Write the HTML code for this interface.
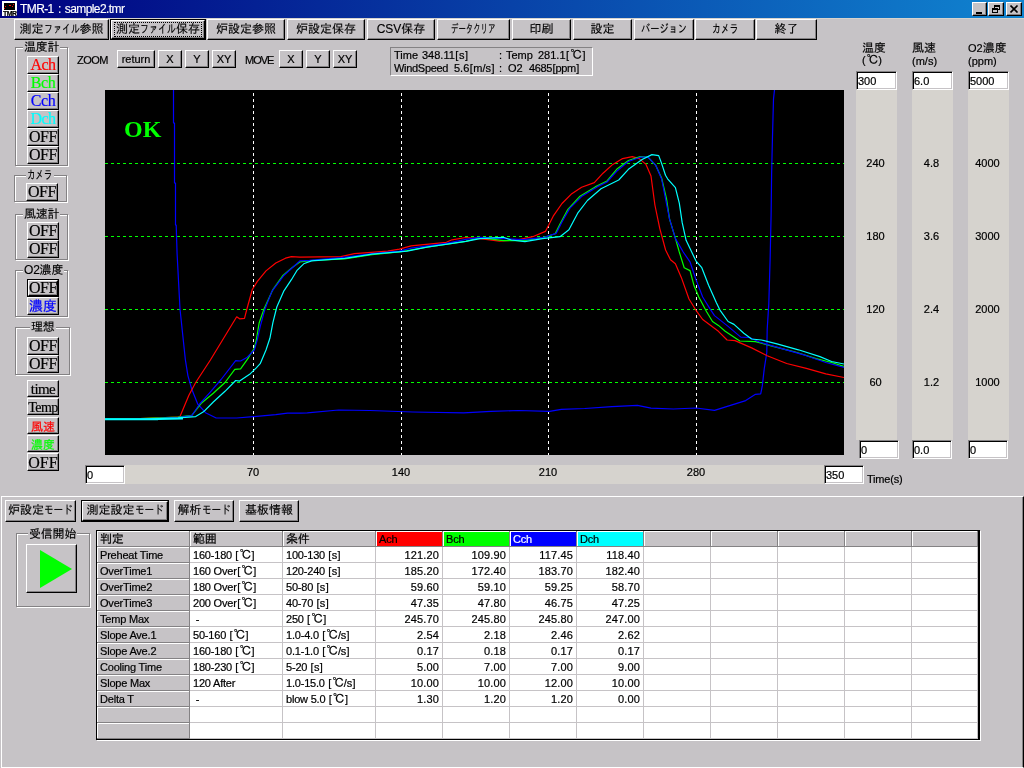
<!DOCTYPE html>
<html lang="ja"><head><meta charset="utf-8"><title>TMR-1 : sample2.tmr</title>
<style>
*{box-sizing:border-box;margin:0;padding:0}
html,body{width:1024px;height:768px;overflow:hidden;background:#C6C3C6}
body{will-change:transform;position:relative;font-family:"Liberation Sans","IPAGothic",sans-serif;font-size:11px;color:#000;line-height:1;-webkit-text-stroke:0.2px currentColor}
.a{position:absolute;white-space:nowrap}
.b{position:absolute;white-space:nowrap;background:#C6C3C6;border:1px solid;border-color:#fff #000 #000 #fff;box-shadow:inset -1px -1px 0 #848284;text-align:center;overflow:hidden}
.jp{font-family:"Liberation Sans","IPAGothic",sans-serif;font-size:12px;-webkit-text-stroke:0.15px currentColor}
.sf{font-family:"Liberation Serif","Noto Serif CJK JP",serif;font-size:16px}
.in{position:absolute;background:#fff;border:1px solid;border-color:#848284 #fff #fff #848284;box-shadow:inset 1px 1px 0 #000, inset -1px -1px 0 #C6C3C6;font-size:11px;padding:4px 0 0 1px;white-space:nowrap}
.gb{position:absolute;border:1px solid #848284;box-shadow:1px 1px 0 #fff, inset 1px 1px 0 #fff}
.lg{position:absolute;background:#C6C3C6;white-space:nowrap;font-size:12px;font-family:"Liberation Sans","IPAGothic",sans-serif;padding:0 1px;-webkit-text-stroke:0.15px currentColor;letter-spacing:-0.2px}
.col{position:absolute;background:#D6D3CE}
.kn{display:inline-block;white-space:nowrap;vertical-align:baseline}
.kn>span{display:inline-block;transform-origin:0 50%}
.q{padding:0 0.5px}
.dc{font-family:"Liberation Sans","IPAGothic",sans-serif;font-size:12px;line-height:0;margin-left:1px;margin-right:-0.5px}
.t{position:absolute;white-space:nowrap;font-size:11px}
</style></head>
<body>
<div class="a" style="left:0;top:0;width:1024px;height:18px;background:linear-gradient(90deg,#000080,#1084D0)"></div>
<div class="a" style="left:0;top:18px;width:1024px;height:1px;background:#D6D3CE"></div>
<div class="a" style="left:2px;top:1px;width:15px;height:15px;background:#fff"></div>
<div class="a" style="left:4px;top:3px;width:11px;height:7px;background:#000"></div>
<div class="a" style="left:5px;top:6px;width:1px;height:1px;background:#f00"></div>
<div class="a" style="left:4px;top:8px;width:1px;height:1px;background:#f00"></div>
<div class="a" style="left:9px;top:5px;width:2px;height:1px;background:#f00"></div>
<div class="a" style="left:13px;top:4px;width:1px;height:1px;background:#f00"></div>
<div class="a" style="left:12px;top:6px;width:1px;height:1px;background:#f00"></div>
<div class="a" style="left:3px;top:10px;font:bold 7px/7px 'Liberation Sans',sans-serif;letter-spacing:-0.6px;color:#000">TMR</div>
<div class="a jp" style="left:20px;top:3px;color:#fff;font-size:12px;letter-spacing:-0.6px;word-spacing:1.5px">TMR-1 : sample2.tmr</div>
<div class="b" style="left:972px;top:2px;width:15px;height:14px;background:#C6C3C6"><div class="a" style="left:3px;top:9px;width:6px;height:2px;background:#000"></div></div>
<div class="b" style="left:988px;top:2px;width:16px;height:14px;background:#C6C3C6"><div class="a" style="left:5px;top:2px;width:6px;height:5px;border:1px solid #000;border-top-width:2px"></div><div class="a" style="left:3px;top:5px;width:6px;height:5px;border:1px solid #000;border-top-width:2px;background:#C6C3C6"></div></div>
<div class="b" style="left:1006px;top:2px;width:16px;height:14px;background:#C6C3C6"><svg class="a" style="left:3px;top:2px" width="9" height="8" viewBox="0 0 9 8"><path d="M0.5 0.5 L7.5 7.5 M7.5 0.5 L0.5 7.5" stroke="#000" stroke-width="1.6" fill="none"/></svg></div>
<div class="b jp k" style="left:14px;top:19px;width:95px;height:21px;line-height:19px">測定<span class="kn" style="width:36px"><span style="transform:scaleX(0.7500)">ファイル</span></span>参照</div>
<div class="a" style="left:110px;top:19px;width:96px;height:21px;background:#000"></div>
<div class="b jp" style="left:111px;top:20px;width:94px;height:19px;line-height:17px"><span style="display:inline-block;border:1px dotted #000;height:15px;line-height:13px;margin-top:1px;padding:0 1px" class="k">測定<span class="kn" style="width:36px"><span style="transform:scaleX(0.7500)">ファイル</span></span>保存</span></div>
<div class="b jp k" style="left:207px;top:19px;width:78px;height:21px;line-height:19px">炉設定参照</div>
<div class="b jp k" style="left:287px;top:19px;width:78px;height:21px;line-height:19px">炉設定保存</div>
<div class="b jp k" style="left:367px;top:19px;width:68px;height:21px;line-height:19px">CSV保存</div>
<div class="b jp k" style="left:437px;top:19px;width:73px;height:21px;line-height:19px"><span class="kn" style="width:44.4px"><span style="transform:scaleX(0.6167)">データクリア</span></span></div>
<div class="b jp k" style="left:512px;top:19px;width:59px;height:21px;line-height:19px">印刷</div>
<div class="b jp k" style="left:573px;top:19px;width:59px;height:21px;line-height:19px">設定</div>
<div class="b jp k" style="left:634px;top:19px;width:60px;height:21px;line-height:19px"><span class="kn" style="width:46px"><span style="transform:scaleX(0.7667)">バージョン</span></span></div>
<div class="b jp k" style="left:695px;top:19px;width:60px;height:21px;line-height:19px"><span class="kn" style="width:26.4px"><span style="transform:scaleX(0.7333)">カメラ</span></span></div>
<div class="b jp k" style="left:756px;top:19px;width:61px;height:21px;line-height:19px">終了</div>
<div class="gb" style="left:15px;top:47px;width:53px;height:119px"></div>
<div class="lg" style="left:23px;top:41px;line-height:12px">温度計</div>
<div class="b sf" style="left:27px;top:56px;width:32px;height:18px;line-height:16px;color:#f00;letter-spacing:-0.5px;">Ach</div>
<div class="b sf" style="left:27px;top:74px;width:32px;height:18px;line-height:16px;color:#0f0;letter-spacing:-0.5px;">Bch</div>
<div class="b sf" style="left:27px;top:92px;width:32px;height:18px;line-height:16px;color:#00f;letter-spacing:-0.5px;">Cch</div>
<div class="b sf" style="left:27px;top:110px;width:32px;height:18px;line-height:16px;color:#0ff;letter-spacing:-0.5px;">Dch</div>
<div class="b sf" style="left:27px;top:128px;width:32px;height:18px;line-height:16px;color:#000;letter-spacing:-0.5px;">OFF</div>
<div class="b sf" style="left:27px;top:146px;width:32px;height:18px;line-height:16px;color:#000;letter-spacing:-0.5px;">OFF</div>
<div class="gb" style="left:14px;top:175px;width:53px;height:27px"></div>
<div class="lg" style="left:26px;top:169px;line-height:12px"><span class="kn" style="width:25.5px"><span style="transform:scaleX(0.7083)">カメラ</span></span></div>
<div class="b sf" style="left:26px;top:183px;width:32px;height:18px;line-height:16px;color:#000;letter-spacing:-0.5px;">OFF</div>
<div class="gb" style="left:15px;top:214px;width:53px;height:46px"></div>
<div class="lg" style="left:23px;top:208px;line-height:12px">風速計</div>
<div class="b sf" style="left:27px;top:222px;width:32px;height:18px;line-height:16px;color:#000;letter-spacing:-0.5px;">OFF</div>
<div class="b sf" style="left:27px;top:240px;width:32px;height:18px;line-height:16px;color:#000;letter-spacing:-0.5px;">OFF</div>
<div class="gb" style="left:15px;top:270px;width:53px;height:47px"></div>
<div class="lg" style="left:23px;top:264px;line-height:12px">O2濃度</div>
<div class="a" style="left:27px;top:279px;width:32px;height:18px;background:#000"></div>
<div class="b sf" style="left:28px;top:280px;width:30px;height:16px;line-height:14px;color:#000;letter-spacing:-0.5px;">OFF</div>
<div class="b sf" style="left:27px;top:297px;width:32px;height:18px;line-height:16px;color:#00f;letter-spacing:0px;font:14px/16px 'Liberation Sans','IPAGothic',sans-serif;">濃度</div>
<div class="gb" style="left:15px;top:327px;width:55px;height:48px"></div>
<div class="lg" style="left:30px;top:321px;line-height:12px">理想</div>
<div class="b sf" style="left:27px;top:337px;width:32px;height:18px;line-height:16px;color:#000;letter-spacing:-0.5px;">OFF</div>
<div class="b sf" style="left:27px;top:355px;width:32px;height:18px;line-height:16px;color:#000;letter-spacing:-0.5px;">OFF</div>
<div class="b sf" style="left:27px;top:380px;width:32px;height:17px;line-height:15px;color:#000;letter-spacing:-1px;line-height:17px;font-size:15px;letter-spacing:-0.6px;">time</div>
<div class="b sf" style="left:27px;top:398px;width:32px;height:17px;line-height:15px;color:#000;letter-spacing:-2px;line-height:17px;font-size:14px;letter-spacing:-0.5px;">Temp</div>
<div class="b sf" style="left:27px;top:417px;width:32px;height:17px;line-height:15px;color:#f00;letter-spacing:0px;font:12px/18px 'Liberation Sans','IPAGothic',sans-serif;">風速</div>
<div class="b sf" style="left:27px;top:435px;width:32px;height:17px;line-height:15px;color:#0f0;letter-spacing:0px;font:12px/18px 'Liberation Sans','IPAGothic',sans-serif;">濃度</div>
<div class="b sf" style="left:27px;top:453px;width:32px;height:18px;line-height:16px;color:#000;letter-spacing:-0.5px;line-height:17px;letter-spacing:0;">OFF</div>
<div class="t" style="left:77px;top:55px;letter-spacing:-0.5px">ZOOM</div>
<div class="b" style="left:117px;top:50px;width:38px;height:18px;line-height:17px;font-size:11px">return</div>
<div class="b" style="left:158px;top:50px;width:24px;height:18px;line-height:17px;font-size:11px">X</div>
<div class="b" style="left:185px;top:50px;width:24px;height:18px;line-height:17px;font-size:11px">Y</div>
<div class="b" style="left:212px;top:50px;width:24px;height:18px;line-height:17px;font-size:11px">XY</div>
<div class="t" style="left:245px;top:55px;letter-spacing:-1px">MOVE</div>
<div class="b" style="left:279px;top:50px;width:24px;height:18px;line-height:17px;font-size:11px">X</div>
<div class="b" style="left:306px;top:50px;width:24px;height:18px;line-height:17px;font-size:11px">Y</div>
<div class="b" style="left:333px;top:50px;width:24px;height:18px;line-height:17px;font-size:11px">XY</div>
<div class="a" style="left:390px;top:47px;width:203px;height:29px;border:1px solid;border-color:#848284 #fff #fff #848284"></div>
<div class="t" style="left:394px;top:50px">Time</div>
<div class="t" style="left:422px;top:50px">348.11<span class="q">[</span>s<span class="q">]</span></div>
<div class="t" style="left:499px;top:50px">:</div>
<div class="t" style="left:506px;top:50px">Temp</div>
<div class="t" style="left:538px;top:50px">281.1<span class="q">[</span><span class="dc">℃</span><span class="q">]</span></div>
<div class="t" style="left:394px;top:63px"><span style="letter-spacing:-0.3px">WindSpeed</span></div>
<div class="t" style="left:454px;top:63px">5.6<span class="q">[</span>m/s<span class="q">]</span></div>
<div class="t" style="left:499px;top:63px">:</div>
<div class="t" style="left:508px;top:63px">O2</div>
<div class="t" style="left:529px;top:63px"><span style="letter-spacing:-0.4px">4685<span class="q">[</span>ppm<span class="q">]</span></span></div>
<svg class="a" style="left:105px;top:90px" width="739" height="365" viewBox="105 90 739 365">
<rect x="105" y="90" width="739" height="365" fill="#000"/>
<line x1="105" x2="844" y1="163.5" y2="163.5" stroke="#0f0" stroke-width="1" stroke-dasharray="3 3" shape-rendering="crispEdges"/>
<line x1="105" x2="844" y1="236.5" y2="236.5" stroke="#0f0" stroke-width="1" stroke-dasharray="3 3" shape-rendering="crispEdges"/>
<line x1="105" x2="844" y1="309.5" y2="309.5" stroke="#0f0" stroke-width="1" stroke-dasharray="3 3" shape-rendering="crispEdges"/>
<line x1="105" x2="844" y1="382.5" y2="382.5" stroke="#0f0" stroke-width="1" stroke-dasharray="3 3" shape-rendering="crispEdges"/>
<line y1="90" y2="455" x1="253.5" x2="253.5" stroke="#fff" stroke-width="1" stroke-dasharray="3 3" stroke-dashoffset="3" shape-rendering="crispEdges"/>
<line y1="90" y2="455" x1="401.5" x2="401.5" stroke="#fff" stroke-width="1" stroke-dasharray="3 3" stroke-dashoffset="3" shape-rendering="crispEdges"/>
<line y1="90" y2="455" x1="548.5" x2="548.5" stroke="#fff" stroke-width="1" stroke-dasharray="3 3" stroke-dashoffset="3" shape-rendering="crispEdges"/>
<line y1="90" y2="455" x1="696.5" x2="696.5" stroke="#fff" stroke-width="1" stroke-dasharray="3 3" stroke-dashoffset="3" shape-rendering="crispEdges"/>
<polyline fill="none" stroke="#00f" stroke-width="1.2" stroke-linejoin="round" points="173.5,90.0 173.5,123.0 174.5,123.0 174.5,183.0 175.5,183.0 175.5,225.0 176.2,225.0 177.1,254.0 180.0,309.0 185.4,360.0 187.9,375.6 191.8,389.3 197.7,404.0 205.5,412.7 216.2,418.0 236.7,418.0 253.3,416.6 275.8,414.7 287.5,413.1 300.0,413.1 307.3,412.8 338.6,410.0 369.8,410.5 412.8,412.0 463.6,412.8 491.0,411.3 518.3,410.5 549.5,411.3 561.3,409.3 584.7,408.5 612.0,406.6 637.4,405.4 651.0,408.1 673.4,409.0 695.9,408.0 714.5,410.4 745.7,400.6 755.5,394.3 760.7,393.8 762.3,385.9 764.3,368.4 766.8,352.7 767.2,329.3 768.8,303.9 770.1,259.8 771.1,215.0 771.6,174.4 772.5,136.0 773.5,99.0 774.5,90.0"/>
<polyline fill="none" stroke="#f00" stroke-width="1.2" stroke-linejoin="round" points="105.0,418.7 140.0,418.7 178.0,417.2 180.0,416.6 188.9,395.2 195.7,382.5 210.4,360.0 236.7,316.8 239.6,318.8 244.5,318.4 246.9,309.0 252.3,289.5 257.2,281.6 266.0,270.9 275.8,263.0 285.5,258.2 291.4,256.6 300.0,257.2 340.8,256.6 354.5,253.7 387.7,251.1 399.4,249.2 411.1,245.9 446.3,242.3 452.1,239.8 465.8,237.5 480.0,238.6 499.5,241.2 519.0,239.6 532.7,236.7 545.4,231.4 553.2,216.2 562.0,203.5 571.8,193.7 581.6,187.3 594.3,182.6 603.0,173.2 612.8,164.4 622.6,158.6 632.3,156.6 639.2,158.6 646.0,164.4 651.0,176.0 654.9,205.0 659.8,228.6 665.6,250.0 670.5,259.8 675.4,263.8 681.3,277.4 689.0,299.0 696.9,311.7 702.7,319.5 718.4,331.3 727.1,340.0 735.0,340.6 751.6,347.9 767.2,355.7 786.7,363.5 806.3,368.4 825.8,373.8 844.0,377.5"/>
<polyline fill="none" stroke="#0f0" stroke-width="1.2" stroke-linejoin="round" points="105.0,418.7 140.0,418.7 178.0,417.2 191.8,415.3 197.7,407.9 201.6,403.0 213.3,393.2 225.0,382.5 234.8,369.4 240.6,368.8 248.4,357.8 254.3,348.0 256.3,340.0 259.2,322.7 264.0,309.0 272.9,289.5 282.6,275.8 292.0,267.7 299.8,261.9 313.4,260.3 344.7,258.9 372.0,254.6 399.4,252.0 426.7,247.2 465.8,241.4 480.0,237.7 503.4,240.6 523.0,240.6 542.5,237.7 555.2,233.8 560.0,224.0 567.9,209.3 579.6,196.6 595.2,186.9 607.0,181.0 616.7,169.3 628.4,160.5 640.2,156.6 648.0,157.2 655.8,165.4 661.6,178.0 666.5,198.6 669.5,218.8 675.4,238.4 679.3,252.0 684.2,267.7 690.0,270.6 693.9,285.2 698.8,297.0 706.6,311.7 712.5,321.5 718.4,325.4 725.2,331.3 739.8,341.0 755.5,341.6 771.1,345.9 794.5,351.8 816.0,358.6 831.6,362.5 844.0,366.4"/>
<polyline fill="none" stroke="#00f" stroke-width="1.2" stroke-linejoin="round" points="105.0,419.0 140.0,419.0 178.0,417.5 191.8,415.7 199.6,404.0 209.4,393.2 221.1,379.5 235.7,360.7 240.6,361.0 246.5,357.8 254.3,350.0 257.2,340.2 260.2,326.6 265.0,309.0 271.9,291.4 283.6,275.8 295.3,265.0 299.8,260.9 309.5,260.3 340.8,257.6 372.0,253.7 399.4,251.1 411.1,248.2 446.3,243.3 465.8,239.4 480.0,237.3 503.4,238.6 523.0,239.6 542.5,237.7 556.2,233.4 562.0,222.0 569.8,208.4 581.6,196.6 597.2,186.9 607.0,182.0 616.7,171.3 628.4,161.5 640.2,157.2 648.0,157.2 655.8,165.4 661.6,179.0 665.5,198.6 669.5,218.8 675.4,238.4 683.2,252.0 690.0,261.8 695.9,279.4 702.7,297.0 710.5,309.6 714.5,315.6 728.1,326.4 740.8,337.1 749.6,337.5 759.4,342.0 782.8,348.8 806.3,355.7 825.8,362.5 844.0,367.4"/>
<polyline fill="none" stroke="#0ff" stroke-width="1.2" stroke-linejoin="round" points="105.0,419.3 140.0,419.3 178.0,417.8 195.7,416.6 203.5,411.8 213.3,402.0 225.0,391.3 235.7,380.5 239.6,381.1 250.4,373.7 256.3,367.8 260.2,363.7 266.0,350.0 269.9,338.3 272.9,322.7 276.8,307.0 283.6,291.4 291.4,279.7 296.8,270.7 303.7,263.8 311.5,260.9 344.7,258.4 372.0,254.1 407.2,251.1 426.7,247.2 465.8,241.4 480.0,238.6 503.4,237.3 511.3,240.0 524.9,241.6 542.5,238.6 560.0,236.7 568.9,229.8 577.7,213.2 587.4,200.5 601.0,188.8 618.7,180.0 628.4,169.3 642.1,159.5 651.9,154.6 658.7,155.6 661.6,163.4 665.5,175.2 667.6,178.8 675.4,187.6 679.3,203.2 682.2,222.7 686.1,240.3 695.9,260.8 701.8,267.7 708.6,285.2 716.4,302.8 720.3,310.7 728.1,321.5 734.0,324.4 743.8,333.2 751.6,339.0 761.3,340.0 777.0,343.9 798.4,349.8 819.9,356.6 831.6,361.5 844.0,364.0"/>
<polyline fill="none" stroke="#0ff" stroke-width="2" points="105,419.3 158,419.3"/><polyline fill="none" stroke="#0ff" stroke-width="1.6" points="158,419.2 183,418.6"/>
<text x="124" y="137" fill="#0f0" font-family="Liberation Serif,serif" font-weight="bold" font-size="24">OK</text>
</svg>
<div class="t jp" style="left:862px;top:42px;font-size:12px">温度</div>
<div class="t" style="left:862px;top:55px;">(<span class="dc">℃</span>)</div>
<div class="t jp" style="left:912px;top:42px;font-size:12px">風速</div>
<div class="t" style="left:912px;top:56px;">(m/s)</div>
<div class="t jp" style="left:968px;top:42px;font-size:12px"><span style="font-size:11px">O2</span>濃度</div>
<div class="t" style="left:968px;top:56px;">(ppm)</div>
<div class="col" style="left:856px;top:90px;width:41px;height:350px"></div>
<div class="in" style="left:856px;top:71px;width:41px;height:19px">300</div>
<div class="in" style="left:859px;top:440px;width:40px;height:19px">0</div>
<div class="t" style="left:855px;top:158px;width:41px;text-align:center">240</div>
<div class="t" style="left:855px;top:231px;width:41px;text-align:center">180</div>
<div class="t" style="left:855px;top:304px;width:41px;text-align:center">120</div>
<div class="t" style="left:855px;top:377px;width:41px;text-align:center">60</div>
<div class="col" style="left:912px;top:90px;width:41px;height:350px"></div>
<div class="in" style="left:912px;top:71px;width:41px;height:19px">6.0</div>
<div class="in" style="left:912px;top:440px;width:40px;height:19px">0.0</div>
<div class="t" style="left:911px;top:158px;width:41px;text-align:center">4.8</div>
<div class="t" style="left:911px;top:231px;width:41px;text-align:center">3.6</div>
<div class="t" style="left:911px;top:304px;width:41px;text-align:center">2.4</div>
<div class="t" style="left:911px;top:377px;width:41px;text-align:center">1.2</div>
<div class="col" style="left:968px;top:90px;width:41px;height:350px"></div>
<div class="in" style="left:968px;top:71px;width:41px;height:19px">5000</div>
<div class="in" style="left:968px;top:440px;width:40px;height:19px">0</div>
<div class="t" style="left:967px;top:158px;width:41px;text-align:center">4000</div>
<div class="t" style="left:967px;top:231px;width:41px;text-align:center">3000</div>
<div class="t" style="left:967px;top:304px;width:41px;text-align:center">2000</div>
<div class="t" style="left:967px;top:377px;width:41px;text-align:center">1000</div>
<div class="col" style="left:125px;top:465px;width:700px;height:19px"></div>
<div class="in" style="left:85px;top:465px;width:40px;height:19px">0</div>
<div class="in" style="left:824px;top:465px;width:40px;height:19px">350</div>
<div class="t" style="left:233px;top:467px;width:40px;text-align:center">70</div>
<div class="t" style="left:381px;top:467px;width:40px;text-align:center">140</div>
<div class="t" style="left:528px;top:467px;width:40px;text-align:center">210</div>
<div class="t" style="left:676px;top:467px;width:40px;text-align:center">280</div>
<div class="t" style="left:867px;top:474px;letter-spacing:-0.2px">Time(s)</div>
<div class="a" style="left:1px;top:496px;width:1023px;height:272px;border-top:1px solid #fff;border-left:1px solid #fff;border-right:1px solid #000;border-bottom:1px solid #fff;box-shadow:inset -1px 0 0 #848284"></div>
<div class="b jp k" style="left:5px;top:500px;width:71px;height:22px;line-height:19px">炉設定<span class="kn" style="width:28.8px"><span style="transform:scaleX(0.8000)">モード</span></span></div>
<div class="a" style="left:81px;top:500px;width:88px;height:22px;background:#000"></div>
<div class="b jp k" style="left:82px;top:501px;width:86px;height:20px;line-height:17px">測定設定<span class="kn" style="width:28.8px"><span style="transform:scaleX(0.8000)">モード</span></span></div>
<div class="b jp k" style="left:174px;top:500px;width:60px;height:22px;line-height:19px">解析<span class="kn" style="width:28.8px"><span style="transform:scaleX(0.8000)">モード</span></span></div>
<div class="b jp k" style="left:239px;top:500px;width:60px;height:22px;line-height:19px">基板情報</div>
<div class="gb" style="left:16px;top:533px;width:74px;height:74px"></div>
<div class="lg" style="left:28px;top:528px;line-height:12px">受信開始</div>
<div class="b" style="left:26px;top:544px;width:51px;height:49px"><svg class="a" style="left:0;top:0" width="49" height="47"><polygon points="13,5 45,24 13,43" fill="#0f0"/></svg></div>
<div class="a" style="left:96px;top:530px;width:884px;height:210px;background:#fff;border:1px solid #000;border-right-width:2px;box-shadow:1px 1px 0 #fff"></div>
<div class="a" style="left:97px;top:531px;width:93px;height:16px;line-height:17px;white-space:pre;background:#C6C3C6;color:#000;border-right:1px solid #848284;border-bottom:1px solid #848284;box-shadow:inset 1px 1px 0 #fff;padding-left:3px;letter-spacing:-0.2px;font-family:'Liberation Sans','IPAGothic',sans-serif;font-size:12px;">判定</div>
<div class="a" style="left:190px;top:531px;width:93px;height:16px;line-height:17px;white-space:pre;background:#C6C3C6;color:#000;border-right:1px solid #848284;border-bottom:1px solid #848284;box-shadow:inset 1px 1px 0 #fff;padding-left:3px;letter-spacing:-0.2px;font-family:'Liberation Sans','IPAGothic',sans-serif;font-size:12px;">範囲</div>
<div class="a" style="left:283px;top:531px;width:93px;height:16px;line-height:17px;white-space:pre;background:#C6C3C6;color:#000;border-right:1px solid #848284;border-bottom:1px solid #848284;box-shadow:inset 1px 1px 0 #fff;padding-left:3px;letter-spacing:-0.2px;font-family:'Liberation Sans','IPAGothic',sans-serif;font-size:12px;">条件</div>
<div class="a" style="left:376px;top:531px;width:67px;height:16px;line-height:17px;white-space:pre;background:#f00;color:#000;border-right:1px solid #848284;border-bottom:1px solid #848284;box-shadow:inset 1px 1px 0 #fff;padding-left:3px;letter-spacing:-0.2px;">Ach</div>
<div class="a" style="left:443px;top:531px;width:67px;height:16px;line-height:17px;white-space:pre;background:#0f0;color:#000;border-right:1px solid #848284;border-bottom:1px solid #848284;box-shadow:inset 1px 1px 0 #fff;padding-left:3px;letter-spacing:-0.2px;">Bch</div>
<div class="a" style="left:510px;top:531px;width:67px;height:16px;line-height:17px;white-space:pre;background:#00f;color:#fff;border-right:1px solid #848284;border-bottom:1px solid #848284;box-shadow:inset 1px 1px 0 #fff;padding-left:3px;letter-spacing:-0.2px;">Cch</div>
<div class="a" style="left:577px;top:531px;width:67px;height:16px;line-height:17px;white-space:pre;background:#0ff;color:#000;border-right:1px solid #848284;border-bottom:1px solid #848284;box-shadow:inset 1px 1px 0 #fff;padding-left:3px;letter-spacing:-0.2px;">Dch</div>
<div class="a" style="left:644px;top:531px;width:67px;height:16px;line-height:17px;white-space:pre;background:#C6C3C6;color:#000;border-right:1px solid #848284;border-bottom:1px solid #848284;box-shadow:inset 1px 1px 0 #fff;padding-left:3px;letter-spacing:-0.2px;"></div>
<div class="a" style="left:711px;top:531px;width:67px;height:16px;line-height:17px;white-space:pre;background:#C6C3C6;color:#000;border-right:1px solid #848284;border-bottom:1px solid #848284;box-shadow:inset 1px 1px 0 #fff;padding-left:3px;letter-spacing:-0.2px;"></div>
<div class="a" style="left:778px;top:531px;width:67px;height:16px;line-height:17px;white-space:pre;background:#C6C3C6;color:#000;border-right:1px solid #848284;border-bottom:1px solid #848284;box-shadow:inset 1px 1px 0 #fff;padding-left:3px;letter-spacing:-0.2px;"></div>
<div class="a" style="left:845px;top:531px;width:67px;height:16px;line-height:17px;white-space:pre;background:#C6C3C6;color:#000;border-right:1px solid #848284;border-bottom:1px solid #848284;box-shadow:inset 1px 1px 0 #fff;padding-left:3px;letter-spacing:-0.2px;"></div>
<div class="a" style="left:912px;top:531px;width:66px;height:16px;line-height:17px;white-space:pre;background:#C6C3C6;color:#000;border-right:1px solid #848284;border-bottom:1px solid #848284;box-shadow:inset 1px 1px 0 #fff;padding-left:3px;letter-spacing:-0.2px;"></div>
<div class="a" style="left:97px;top:547px;width:93px;height:16px;line-height:17px;white-space:pre;background:#C6C3C6;color:#000;border-right:1px solid #848284;border-bottom:1px solid #848284;box-shadow:inset 1px 1px 0 #fff;padding-left:3px;letter-spacing:-0.2px;">Preheat Time</div>
<div class="a" style="left:190px;top:547px;width:93px;height:16px;line-height:17px;white-space:pre;background:#fff;border-right:1px solid #C6C3C6;border-bottom:1px solid #C6C3C6;padding-left:3px;letter-spacing:-0.2px;">160-180 <span class="q">[</span><span class="dc">℃</span><span class="q">]</span></div>
<div class="a" style="left:283px;top:547px;width:93px;height:16px;line-height:17px;white-space:pre;background:#fff;border-right:1px solid #C6C3C6;border-bottom:1px solid #C6C3C6;padding-left:3px;letter-spacing:-0.2px;">100-130 <span class="q">[</span>s<span class="q">]</span></div>
<div class="a" style="left:376px;top:547px;width:67px;height:16px;line-height:17px;white-space:pre;background:#fff;border-right:1px solid #C6C3C6;border-bottom:1px solid #C6C3C6;text-align:right;padding-right:3px;letter-spacing:0.15px;">121.20</div>
<div class="a" style="left:443px;top:547px;width:67px;height:16px;line-height:17px;white-space:pre;background:#fff;border-right:1px solid #C6C3C6;border-bottom:1px solid #C6C3C6;text-align:right;padding-right:3px;letter-spacing:0.15px;">109.90</div>
<div class="a" style="left:510px;top:547px;width:67px;height:16px;line-height:17px;white-space:pre;background:#fff;border-right:1px solid #C6C3C6;border-bottom:1px solid #C6C3C6;text-align:right;padding-right:3px;letter-spacing:0.15px;">117.45</div>
<div class="a" style="left:577px;top:547px;width:67px;height:16px;line-height:17px;white-space:pre;background:#fff;border-right:1px solid #C6C3C6;border-bottom:1px solid #C6C3C6;text-align:right;padding-right:3px;letter-spacing:0.15px;">118.40</div>
<div class="a" style="left:644px;top:547px;width:67px;height:16px;line-height:17px;white-space:pre;background:#fff;border-right:1px solid #C6C3C6;border-bottom:1px solid #C6C3C6;text-align:right;padding-right:3px;letter-spacing:0.15px;"></div>
<div class="a" style="left:711px;top:547px;width:67px;height:16px;line-height:17px;white-space:pre;background:#fff;border-right:1px solid #C6C3C6;border-bottom:1px solid #C6C3C6;text-align:right;padding-right:3px;letter-spacing:0.15px;"></div>
<div class="a" style="left:778px;top:547px;width:67px;height:16px;line-height:17px;white-space:pre;background:#fff;border-right:1px solid #C6C3C6;border-bottom:1px solid #C6C3C6;text-align:right;padding-right:3px;letter-spacing:0.15px;"></div>
<div class="a" style="left:845px;top:547px;width:67px;height:16px;line-height:17px;white-space:pre;background:#fff;border-right:1px solid #C6C3C6;border-bottom:1px solid #C6C3C6;text-align:right;padding-right:3px;letter-spacing:0.15px;"></div>
<div class="a" style="left:912px;top:547px;width:66px;height:16px;line-height:17px;white-space:pre;background:#fff;border-right:1px solid #C6C3C6;border-bottom:1px solid #C6C3C6;text-align:right;padding-right:3px;letter-spacing:0.15px;"></div>
<div class="a" style="left:97px;top:563px;width:93px;height:16px;line-height:17px;white-space:pre;background:#C6C3C6;color:#000;border-right:1px solid #848284;border-bottom:1px solid #848284;box-shadow:inset 1px 1px 0 #fff;padding-left:3px;letter-spacing:-0.2px;">OverTime1</div>
<div class="a" style="left:190px;top:563px;width:93px;height:16px;line-height:17px;white-space:pre;background:#fff;border-right:1px solid #C6C3C6;border-bottom:1px solid #C6C3C6;padding-left:3px;letter-spacing:-0.2px;">160 Over<span class="q">[</span><span class="dc">℃</span><span class="q">]</span></div>
<div class="a" style="left:283px;top:563px;width:93px;height:16px;line-height:17px;white-space:pre;background:#fff;border-right:1px solid #C6C3C6;border-bottom:1px solid #C6C3C6;padding-left:3px;letter-spacing:-0.2px;">120-240 <span class="q">[</span>s<span class="q">]</span></div>
<div class="a" style="left:376px;top:563px;width:67px;height:16px;line-height:17px;white-space:pre;background:#fff;border-right:1px solid #C6C3C6;border-bottom:1px solid #C6C3C6;text-align:right;padding-right:3px;letter-spacing:0.15px;">185.20</div>
<div class="a" style="left:443px;top:563px;width:67px;height:16px;line-height:17px;white-space:pre;background:#fff;border-right:1px solid #C6C3C6;border-bottom:1px solid #C6C3C6;text-align:right;padding-right:3px;letter-spacing:0.15px;">172.40</div>
<div class="a" style="left:510px;top:563px;width:67px;height:16px;line-height:17px;white-space:pre;background:#fff;border-right:1px solid #C6C3C6;border-bottom:1px solid #C6C3C6;text-align:right;padding-right:3px;letter-spacing:0.15px;">183.70</div>
<div class="a" style="left:577px;top:563px;width:67px;height:16px;line-height:17px;white-space:pre;background:#fff;border-right:1px solid #C6C3C6;border-bottom:1px solid #C6C3C6;text-align:right;padding-right:3px;letter-spacing:0.15px;">182.40</div>
<div class="a" style="left:644px;top:563px;width:67px;height:16px;line-height:17px;white-space:pre;background:#fff;border-right:1px solid #C6C3C6;border-bottom:1px solid #C6C3C6;text-align:right;padding-right:3px;letter-spacing:0.15px;"></div>
<div class="a" style="left:711px;top:563px;width:67px;height:16px;line-height:17px;white-space:pre;background:#fff;border-right:1px solid #C6C3C6;border-bottom:1px solid #C6C3C6;text-align:right;padding-right:3px;letter-spacing:0.15px;"></div>
<div class="a" style="left:778px;top:563px;width:67px;height:16px;line-height:17px;white-space:pre;background:#fff;border-right:1px solid #C6C3C6;border-bottom:1px solid #C6C3C6;text-align:right;padding-right:3px;letter-spacing:0.15px;"></div>
<div class="a" style="left:845px;top:563px;width:67px;height:16px;line-height:17px;white-space:pre;background:#fff;border-right:1px solid #C6C3C6;border-bottom:1px solid #C6C3C6;text-align:right;padding-right:3px;letter-spacing:0.15px;"></div>
<div class="a" style="left:912px;top:563px;width:66px;height:16px;line-height:17px;white-space:pre;background:#fff;border-right:1px solid #C6C3C6;border-bottom:1px solid #C6C3C6;text-align:right;padding-right:3px;letter-spacing:0.15px;"></div>
<div class="a" style="left:97px;top:579px;width:93px;height:16px;line-height:17px;white-space:pre;background:#C6C3C6;color:#000;border-right:1px solid #848284;border-bottom:1px solid #848284;box-shadow:inset 1px 1px 0 #fff;padding-left:3px;letter-spacing:-0.2px;">OverTime2</div>
<div class="a" style="left:190px;top:579px;width:93px;height:16px;line-height:17px;white-space:pre;background:#fff;border-right:1px solid #C6C3C6;border-bottom:1px solid #C6C3C6;padding-left:3px;letter-spacing:-0.2px;">180 Over<span class="q">[</span><span class="dc">℃</span><span class="q">]</span></div>
<div class="a" style="left:283px;top:579px;width:93px;height:16px;line-height:17px;white-space:pre;background:#fff;border-right:1px solid #C6C3C6;border-bottom:1px solid #C6C3C6;padding-left:3px;letter-spacing:-0.2px;">50-80 <span class="q">[</span>s<span class="q">]</span></div>
<div class="a" style="left:376px;top:579px;width:67px;height:16px;line-height:17px;white-space:pre;background:#fff;border-right:1px solid #C6C3C6;border-bottom:1px solid #C6C3C6;text-align:right;padding-right:3px;letter-spacing:0.15px;">59.60</div>
<div class="a" style="left:443px;top:579px;width:67px;height:16px;line-height:17px;white-space:pre;background:#fff;border-right:1px solid #C6C3C6;border-bottom:1px solid #C6C3C6;text-align:right;padding-right:3px;letter-spacing:0.15px;">59.10</div>
<div class="a" style="left:510px;top:579px;width:67px;height:16px;line-height:17px;white-space:pre;background:#fff;border-right:1px solid #C6C3C6;border-bottom:1px solid #C6C3C6;text-align:right;padding-right:3px;letter-spacing:0.15px;">59.25</div>
<div class="a" style="left:577px;top:579px;width:67px;height:16px;line-height:17px;white-space:pre;background:#fff;border-right:1px solid #C6C3C6;border-bottom:1px solid #C6C3C6;text-align:right;padding-right:3px;letter-spacing:0.15px;">58.70</div>
<div class="a" style="left:644px;top:579px;width:67px;height:16px;line-height:17px;white-space:pre;background:#fff;border-right:1px solid #C6C3C6;border-bottom:1px solid #C6C3C6;text-align:right;padding-right:3px;letter-spacing:0.15px;"></div>
<div class="a" style="left:711px;top:579px;width:67px;height:16px;line-height:17px;white-space:pre;background:#fff;border-right:1px solid #C6C3C6;border-bottom:1px solid #C6C3C6;text-align:right;padding-right:3px;letter-spacing:0.15px;"></div>
<div class="a" style="left:778px;top:579px;width:67px;height:16px;line-height:17px;white-space:pre;background:#fff;border-right:1px solid #C6C3C6;border-bottom:1px solid #C6C3C6;text-align:right;padding-right:3px;letter-spacing:0.15px;"></div>
<div class="a" style="left:845px;top:579px;width:67px;height:16px;line-height:17px;white-space:pre;background:#fff;border-right:1px solid #C6C3C6;border-bottom:1px solid #C6C3C6;text-align:right;padding-right:3px;letter-spacing:0.15px;"></div>
<div class="a" style="left:912px;top:579px;width:66px;height:16px;line-height:17px;white-space:pre;background:#fff;border-right:1px solid #C6C3C6;border-bottom:1px solid #C6C3C6;text-align:right;padding-right:3px;letter-spacing:0.15px;"></div>
<div class="a" style="left:97px;top:595px;width:93px;height:16px;line-height:17px;white-space:pre;background:#C6C3C6;color:#000;border-right:1px solid #848284;border-bottom:1px solid #848284;box-shadow:inset 1px 1px 0 #fff;padding-left:3px;letter-spacing:-0.2px;">OverTime3</div>
<div class="a" style="left:190px;top:595px;width:93px;height:16px;line-height:17px;white-space:pre;background:#fff;border-right:1px solid #C6C3C6;border-bottom:1px solid #C6C3C6;padding-left:3px;letter-spacing:-0.2px;">200 Over<span class="q">[</span><span class="dc">℃</span><span class="q">]</span></div>
<div class="a" style="left:283px;top:595px;width:93px;height:16px;line-height:17px;white-space:pre;background:#fff;border-right:1px solid #C6C3C6;border-bottom:1px solid #C6C3C6;padding-left:3px;letter-spacing:-0.2px;">40-70 <span class="q">[</span>s<span class="q">]</span></div>
<div class="a" style="left:376px;top:595px;width:67px;height:16px;line-height:17px;white-space:pre;background:#fff;border-right:1px solid #C6C3C6;border-bottom:1px solid #C6C3C6;text-align:right;padding-right:3px;letter-spacing:0.15px;">47.35</div>
<div class="a" style="left:443px;top:595px;width:67px;height:16px;line-height:17px;white-space:pre;background:#fff;border-right:1px solid #C6C3C6;border-bottom:1px solid #C6C3C6;text-align:right;padding-right:3px;letter-spacing:0.15px;">47.80</div>
<div class="a" style="left:510px;top:595px;width:67px;height:16px;line-height:17px;white-space:pre;background:#fff;border-right:1px solid #C6C3C6;border-bottom:1px solid #C6C3C6;text-align:right;padding-right:3px;letter-spacing:0.15px;">46.75</div>
<div class="a" style="left:577px;top:595px;width:67px;height:16px;line-height:17px;white-space:pre;background:#fff;border-right:1px solid #C6C3C6;border-bottom:1px solid #C6C3C6;text-align:right;padding-right:3px;letter-spacing:0.15px;">47.25</div>
<div class="a" style="left:644px;top:595px;width:67px;height:16px;line-height:17px;white-space:pre;background:#fff;border-right:1px solid #C6C3C6;border-bottom:1px solid #C6C3C6;text-align:right;padding-right:3px;letter-spacing:0.15px;"></div>
<div class="a" style="left:711px;top:595px;width:67px;height:16px;line-height:17px;white-space:pre;background:#fff;border-right:1px solid #C6C3C6;border-bottom:1px solid #C6C3C6;text-align:right;padding-right:3px;letter-spacing:0.15px;"></div>
<div class="a" style="left:778px;top:595px;width:67px;height:16px;line-height:17px;white-space:pre;background:#fff;border-right:1px solid #C6C3C6;border-bottom:1px solid #C6C3C6;text-align:right;padding-right:3px;letter-spacing:0.15px;"></div>
<div class="a" style="left:845px;top:595px;width:67px;height:16px;line-height:17px;white-space:pre;background:#fff;border-right:1px solid #C6C3C6;border-bottom:1px solid #C6C3C6;text-align:right;padding-right:3px;letter-spacing:0.15px;"></div>
<div class="a" style="left:912px;top:595px;width:66px;height:16px;line-height:17px;white-space:pre;background:#fff;border-right:1px solid #C6C3C6;border-bottom:1px solid #C6C3C6;text-align:right;padding-right:3px;letter-spacing:0.15px;"></div>
<div class="a" style="left:97px;top:611px;width:93px;height:16px;line-height:17px;white-space:pre;background:#C6C3C6;color:#000;border-right:1px solid #848284;border-bottom:1px solid #848284;box-shadow:inset 1px 1px 0 #fff;padding-left:3px;letter-spacing:-0.2px;">Temp Max</div>
<div class="a" style="left:190px;top:611px;width:93px;height:16px;line-height:17px;white-space:pre;background:#fff;border-right:1px solid #C6C3C6;border-bottom:1px solid #C6C3C6;padding-left:3px;letter-spacing:-0.2px;"> -</div>
<div class="a" style="left:283px;top:611px;width:93px;height:16px;line-height:17px;white-space:pre;background:#fff;border-right:1px solid #C6C3C6;border-bottom:1px solid #C6C3C6;padding-left:3px;letter-spacing:-0.2px;">250 <span class="q">[</span><span class="dc">℃</span><span class="q">]</span></div>
<div class="a" style="left:376px;top:611px;width:67px;height:16px;line-height:17px;white-space:pre;background:#fff;border-right:1px solid #C6C3C6;border-bottom:1px solid #C6C3C6;text-align:right;padding-right:3px;letter-spacing:0.15px;">245.70</div>
<div class="a" style="left:443px;top:611px;width:67px;height:16px;line-height:17px;white-space:pre;background:#fff;border-right:1px solid #C6C3C6;border-bottom:1px solid #C6C3C6;text-align:right;padding-right:3px;letter-spacing:0.15px;">245.80</div>
<div class="a" style="left:510px;top:611px;width:67px;height:16px;line-height:17px;white-space:pre;background:#fff;border-right:1px solid #C6C3C6;border-bottom:1px solid #C6C3C6;text-align:right;padding-right:3px;letter-spacing:0.15px;">245.80</div>
<div class="a" style="left:577px;top:611px;width:67px;height:16px;line-height:17px;white-space:pre;background:#fff;border-right:1px solid #C6C3C6;border-bottom:1px solid #C6C3C6;text-align:right;padding-right:3px;letter-spacing:0.15px;">247.00</div>
<div class="a" style="left:644px;top:611px;width:67px;height:16px;line-height:17px;white-space:pre;background:#fff;border-right:1px solid #C6C3C6;border-bottom:1px solid #C6C3C6;text-align:right;padding-right:3px;letter-spacing:0.15px;"></div>
<div class="a" style="left:711px;top:611px;width:67px;height:16px;line-height:17px;white-space:pre;background:#fff;border-right:1px solid #C6C3C6;border-bottom:1px solid #C6C3C6;text-align:right;padding-right:3px;letter-spacing:0.15px;"></div>
<div class="a" style="left:778px;top:611px;width:67px;height:16px;line-height:17px;white-space:pre;background:#fff;border-right:1px solid #C6C3C6;border-bottom:1px solid #C6C3C6;text-align:right;padding-right:3px;letter-spacing:0.15px;"></div>
<div class="a" style="left:845px;top:611px;width:67px;height:16px;line-height:17px;white-space:pre;background:#fff;border-right:1px solid #C6C3C6;border-bottom:1px solid #C6C3C6;text-align:right;padding-right:3px;letter-spacing:0.15px;"></div>
<div class="a" style="left:912px;top:611px;width:66px;height:16px;line-height:17px;white-space:pre;background:#fff;border-right:1px solid #C6C3C6;border-bottom:1px solid #C6C3C6;text-align:right;padding-right:3px;letter-spacing:0.15px;"></div>
<div class="a" style="left:97px;top:627px;width:93px;height:16px;line-height:17px;white-space:pre;background:#C6C3C6;color:#000;border-right:1px solid #848284;border-bottom:1px solid #848284;box-shadow:inset 1px 1px 0 #fff;padding-left:3px;letter-spacing:-0.2px;">Slope Ave.1</div>
<div class="a" style="left:190px;top:627px;width:93px;height:16px;line-height:17px;white-space:pre;background:#fff;border-right:1px solid #C6C3C6;border-bottom:1px solid #C6C3C6;padding-left:3px;letter-spacing:-0.2px;">50-160 <span class="q">[</span><span class="dc">℃</span><span class="q">]</span></div>
<div class="a" style="left:283px;top:627px;width:93px;height:16px;line-height:17px;white-space:pre;background:#fff;border-right:1px solid #C6C3C6;border-bottom:1px solid #C6C3C6;padding-left:3px;letter-spacing:-0.2px;">1.0-4.0 <span class="q">[</span><span class="dc">℃</span>/s<span class="q">]</span></div>
<div class="a" style="left:376px;top:627px;width:67px;height:16px;line-height:17px;white-space:pre;background:#fff;border-right:1px solid #C6C3C6;border-bottom:1px solid #C6C3C6;text-align:right;padding-right:3px;letter-spacing:0.15px;">2.54</div>
<div class="a" style="left:443px;top:627px;width:67px;height:16px;line-height:17px;white-space:pre;background:#fff;border-right:1px solid #C6C3C6;border-bottom:1px solid #C6C3C6;text-align:right;padding-right:3px;letter-spacing:0.15px;">2.18</div>
<div class="a" style="left:510px;top:627px;width:67px;height:16px;line-height:17px;white-space:pre;background:#fff;border-right:1px solid #C6C3C6;border-bottom:1px solid #C6C3C6;text-align:right;padding-right:3px;letter-spacing:0.15px;">2.46</div>
<div class="a" style="left:577px;top:627px;width:67px;height:16px;line-height:17px;white-space:pre;background:#fff;border-right:1px solid #C6C3C6;border-bottom:1px solid #C6C3C6;text-align:right;padding-right:3px;letter-spacing:0.15px;">2.62</div>
<div class="a" style="left:644px;top:627px;width:67px;height:16px;line-height:17px;white-space:pre;background:#fff;border-right:1px solid #C6C3C6;border-bottom:1px solid #C6C3C6;text-align:right;padding-right:3px;letter-spacing:0.15px;"></div>
<div class="a" style="left:711px;top:627px;width:67px;height:16px;line-height:17px;white-space:pre;background:#fff;border-right:1px solid #C6C3C6;border-bottom:1px solid #C6C3C6;text-align:right;padding-right:3px;letter-spacing:0.15px;"></div>
<div class="a" style="left:778px;top:627px;width:67px;height:16px;line-height:17px;white-space:pre;background:#fff;border-right:1px solid #C6C3C6;border-bottom:1px solid #C6C3C6;text-align:right;padding-right:3px;letter-spacing:0.15px;"></div>
<div class="a" style="left:845px;top:627px;width:67px;height:16px;line-height:17px;white-space:pre;background:#fff;border-right:1px solid #C6C3C6;border-bottom:1px solid #C6C3C6;text-align:right;padding-right:3px;letter-spacing:0.15px;"></div>
<div class="a" style="left:912px;top:627px;width:66px;height:16px;line-height:17px;white-space:pre;background:#fff;border-right:1px solid #C6C3C6;border-bottom:1px solid #C6C3C6;text-align:right;padding-right:3px;letter-spacing:0.15px;"></div>
<div class="a" style="left:97px;top:643px;width:93px;height:16px;line-height:17px;white-space:pre;background:#C6C3C6;color:#000;border-right:1px solid #848284;border-bottom:1px solid #848284;box-shadow:inset 1px 1px 0 #fff;padding-left:3px;letter-spacing:-0.2px;">Slope Ave.2</div>
<div class="a" style="left:190px;top:643px;width:93px;height:16px;line-height:17px;white-space:pre;background:#fff;border-right:1px solid #C6C3C6;border-bottom:1px solid #C6C3C6;padding-left:3px;letter-spacing:-0.2px;">160-180 <span class="q">[</span><span class="dc">℃</span><span class="q">]</span></div>
<div class="a" style="left:283px;top:643px;width:93px;height:16px;line-height:17px;white-space:pre;background:#fff;border-right:1px solid #C6C3C6;border-bottom:1px solid #C6C3C6;padding-left:3px;letter-spacing:-0.2px;">0.1-1.0 <span class="q">[</span><span class="dc">℃</span>/s<span class="q">]</span></div>
<div class="a" style="left:376px;top:643px;width:67px;height:16px;line-height:17px;white-space:pre;background:#fff;border-right:1px solid #C6C3C6;border-bottom:1px solid #C6C3C6;text-align:right;padding-right:3px;letter-spacing:0.15px;">0.17</div>
<div class="a" style="left:443px;top:643px;width:67px;height:16px;line-height:17px;white-space:pre;background:#fff;border-right:1px solid #C6C3C6;border-bottom:1px solid #C6C3C6;text-align:right;padding-right:3px;letter-spacing:0.15px;">0.18</div>
<div class="a" style="left:510px;top:643px;width:67px;height:16px;line-height:17px;white-space:pre;background:#fff;border-right:1px solid #C6C3C6;border-bottom:1px solid #C6C3C6;text-align:right;padding-right:3px;letter-spacing:0.15px;">0.17</div>
<div class="a" style="left:577px;top:643px;width:67px;height:16px;line-height:17px;white-space:pre;background:#fff;border-right:1px solid #C6C3C6;border-bottom:1px solid #C6C3C6;text-align:right;padding-right:3px;letter-spacing:0.15px;">0.17</div>
<div class="a" style="left:644px;top:643px;width:67px;height:16px;line-height:17px;white-space:pre;background:#fff;border-right:1px solid #C6C3C6;border-bottom:1px solid #C6C3C6;text-align:right;padding-right:3px;letter-spacing:0.15px;"></div>
<div class="a" style="left:711px;top:643px;width:67px;height:16px;line-height:17px;white-space:pre;background:#fff;border-right:1px solid #C6C3C6;border-bottom:1px solid #C6C3C6;text-align:right;padding-right:3px;letter-spacing:0.15px;"></div>
<div class="a" style="left:778px;top:643px;width:67px;height:16px;line-height:17px;white-space:pre;background:#fff;border-right:1px solid #C6C3C6;border-bottom:1px solid #C6C3C6;text-align:right;padding-right:3px;letter-spacing:0.15px;"></div>
<div class="a" style="left:845px;top:643px;width:67px;height:16px;line-height:17px;white-space:pre;background:#fff;border-right:1px solid #C6C3C6;border-bottom:1px solid #C6C3C6;text-align:right;padding-right:3px;letter-spacing:0.15px;"></div>
<div class="a" style="left:912px;top:643px;width:66px;height:16px;line-height:17px;white-space:pre;background:#fff;border-right:1px solid #C6C3C6;border-bottom:1px solid #C6C3C6;text-align:right;padding-right:3px;letter-spacing:0.15px;"></div>
<div class="a" style="left:97px;top:659px;width:93px;height:16px;line-height:17px;white-space:pre;background:#C6C3C6;color:#000;border-right:1px solid #848284;border-bottom:1px solid #848284;box-shadow:inset 1px 1px 0 #fff;padding-left:3px;letter-spacing:-0.2px;">Cooling Time</div>
<div class="a" style="left:190px;top:659px;width:93px;height:16px;line-height:17px;white-space:pre;background:#fff;border-right:1px solid #C6C3C6;border-bottom:1px solid #C6C3C6;padding-left:3px;letter-spacing:-0.2px;">180-230 <span class="q">[</span><span class="dc">℃</span><span class="q">]</span></div>
<div class="a" style="left:283px;top:659px;width:93px;height:16px;line-height:17px;white-space:pre;background:#fff;border-right:1px solid #C6C3C6;border-bottom:1px solid #C6C3C6;padding-left:3px;letter-spacing:-0.2px;">5-20 <span class="q">[</span>s<span class="q">]</span></div>
<div class="a" style="left:376px;top:659px;width:67px;height:16px;line-height:17px;white-space:pre;background:#fff;border-right:1px solid #C6C3C6;border-bottom:1px solid #C6C3C6;text-align:right;padding-right:3px;letter-spacing:0.15px;">5.00</div>
<div class="a" style="left:443px;top:659px;width:67px;height:16px;line-height:17px;white-space:pre;background:#fff;border-right:1px solid #C6C3C6;border-bottom:1px solid #C6C3C6;text-align:right;padding-right:3px;letter-spacing:0.15px;">7.00</div>
<div class="a" style="left:510px;top:659px;width:67px;height:16px;line-height:17px;white-space:pre;background:#fff;border-right:1px solid #C6C3C6;border-bottom:1px solid #C6C3C6;text-align:right;padding-right:3px;letter-spacing:0.15px;">7.00</div>
<div class="a" style="left:577px;top:659px;width:67px;height:16px;line-height:17px;white-space:pre;background:#fff;border-right:1px solid #C6C3C6;border-bottom:1px solid #C6C3C6;text-align:right;padding-right:3px;letter-spacing:0.15px;">9.00</div>
<div class="a" style="left:644px;top:659px;width:67px;height:16px;line-height:17px;white-space:pre;background:#fff;border-right:1px solid #C6C3C6;border-bottom:1px solid #C6C3C6;text-align:right;padding-right:3px;letter-spacing:0.15px;"></div>
<div class="a" style="left:711px;top:659px;width:67px;height:16px;line-height:17px;white-space:pre;background:#fff;border-right:1px solid #C6C3C6;border-bottom:1px solid #C6C3C6;text-align:right;padding-right:3px;letter-spacing:0.15px;"></div>
<div class="a" style="left:778px;top:659px;width:67px;height:16px;line-height:17px;white-space:pre;background:#fff;border-right:1px solid #C6C3C6;border-bottom:1px solid #C6C3C6;text-align:right;padding-right:3px;letter-spacing:0.15px;"></div>
<div class="a" style="left:845px;top:659px;width:67px;height:16px;line-height:17px;white-space:pre;background:#fff;border-right:1px solid #C6C3C6;border-bottom:1px solid #C6C3C6;text-align:right;padding-right:3px;letter-spacing:0.15px;"></div>
<div class="a" style="left:912px;top:659px;width:66px;height:16px;line-height:17px;white-space:pre;background:#fff;border-right:1px solid #C6C3C6;border-bottom:1px solid #C6C3C6;text-align:right;padding-right:3px;letter-spacing:0.15px;"></div>
<div class="a" style="left:97px;top:675px;width:93px;height:16px;line-height:17px;white-space:pre;background:#C6C3C6;color:#000;border-right:1px solid #848284;border-bottom:1px solid #848284;box-shadow:inset 1px 1px 0 #fff;padding-left:3px;letter-spacing:-0.2px;">Slope Max</div>
<div class="a" style="left:190px;top:675px;width:93px;height:16px;line-height:17px;white-space:pre;background:#fff;border-right:1px solid #C6C3C6;border-bottom:1px solid #C6C3C6;padding-left:3px;letter-spacing:-0.2px;">120 After</div>
<div class="a" style="left:283px;top:675px;width:93px;height:16px;line-height:17px;white-space:pre;background:#fff;border-right:1px solid #C6C3C6;border-bottom:1px solid #C6C3C6;padding-left:3px;letter-spacing:-0.2px;">1.0-15.0 <span class="q">[</span><span class="dc">℃</span>/s<span class="q">]</span></div>
<div class="a" style="left:376px;top:675px;width:67px;height:16px;line-height:17px;white-space:pre;background:#fff;border-right:1px solid #C6C3C6;border-bottom:1px solid #C6C3C6;text-align:right;padding-right:3px;letter-spacing:0.15px;">10.00</div>
<div class="a" style="left:443px;top:675px;width:67px;height:16px;line-height:17px;white-space:pre;background:#fff;border-right:1px solid #C6C3C6;border-bottom:1px solid #C6C3C6;text-align:right;padding-right:3px;letter-spacing:0.15px;">10.00</div>
<div class="a" style="left:510px;top:675px;width:67px;height:16px;line-height:17px;white-space:pre;background:#fff;border-right:1px solid #C6C3C6;border-bottom:1px solid #C6C3C6;text-align:right;padding-right:3px;letter-spacing:0.15px;">12.00</div>
<div class="a" style="left:577px;top:675px;width:67px;height:16px;line-height:17px;white-space:pre;background:#fff;border-right:1px solid #C6C3C6;border-bottom:1px solid #C6C3C6;text-align:right;padding-right:3px;letter-spacing:0.15px;">10.00</div>
<div class="a" style="left:644px;top:675px;width:67px;height:16px;line-height:17px;white-space:pre;background:#fff;border-right:1px solid #C6C3C6;border-bottom:1px solid #C6C3C6;text-align:right;padding-right:3px;letter-spacing:0.15px;"></div>
<div class="a" style="left:711px;top:675px;width:67px;height:16px;line-height:17px;white-space:pre;background:#fff;border-right:1px solid #C6C3C6;border-bottom:1px solid #C6C3C6;text-align:right;padding-right:3px;letter-spacing:0.15px;"></div>
<div class="a" style="left:778px;top:675px;width:67px;height:16px;line-height:17px;white-space:pre;background:#fff;border-right:1px solid #C6C3C6;border-bottom:1px solid #C6C3C6;text-align:right;padding-right:3px;letter-spacing:0.15px;"></div>
<div class="a" style="left:845px;top:675px;width:67px;height:16px;line-height:17px;white-space:pre;background:#fff;border-right:1px solid #C6C3C6;border-bottom:1px solid #C6C3C6;text-align:right;padding-right:3px;letter-spacing:0.15px;"></div>
<div class="a" style="left:912px;top:675px;width:66px;height:16px;line-height:17px;white-space:pre;background:#fff;border-right:1px solid #C6C3C6;border-bottom:1px solid #C6C3C6;text-align:right;padding-right:3px;letter-spacing:0.15px;"></div>
<div class="a" style="left:97px;top:691px;width:93px;height:16px;line-height:17px;white-space:pre;background:#C6C3C6;color:#000;border-right:1px solid #848284;border-bottom:1px solid #848284;box-shadow:inset 1px 1px 0 #fff;padding-left:3px;letter-spacing:-0.2px;">Delta T</div>
<div class="a" style="left:190px;top:691px;width:93px;height:16px;line-height:17px;white-space:pre;background:#fff;border-right:1px solid #C6C3C6;border-bottom:1px solid #C6C3C6;padding-left:3px;letter-spacing:-0.2px;"> -</div>
<div class="a" style="left:283px;top:691px;width:93px;height:16px;line-height:17px;white-space:pre;background:#fff;border-right:1px solid #C6C3C6;border-bottom:1px solid #C6C3C6;padding-left:3px;letter-spacing:-0.2px;">blow 5.0 <span class="q">[</span><span class="dc">℃</span><span class="q">]</span></div>
<div class="a" style="left:376px;top:691px;width:67px;height:16px;line-height:17px;white-space:pre;background:#fff;border-right:1px solid #C6C3C6;border-bottom:1px solid #C6C3C6;text-align:right;padding-right:3px;letter-spacing:0.15px;">1.30</div>
<div class="a" style="left:443px;top:691px;width:67px;height:16px;line-height:17px;white-space:pre;background:#fff;border-right:1px solid #C6C3C6;border-bottom:1px solid #C6C3C6;text-align:right;padding-right:3px;letter-spacing:0.15px;">1.20</div>
<div class="a" style="left:510px;top:691px;width:67px;height:16px;line-height:17px;white-space:pre;background:#fff;border-right:1px solid #C6C3C6;border-bottom:1px solid #C6C3C6;text-align:right;padding-right:3px;letter-spacing:0.15px;">1.20</div>
<div class="a" style="left:577px;top:691px;width:67px;height:16px;line-height:17px;white-space:pre;background:#fff;border-right:1px solid #C6C3C6;border-bottom:1px solid #C6C3C6;text-align:right;padding-right:3px;letter-spacing:0.15px;">0.00</div>
<div class="a" style="left:644px;top:691px;width:67px;height:16px;line-height:17px;white-space:pre;background:#fff;border-right:1px solid #C6C3C6;border-bottom:1px solid #C6C3C6;text-align:right;padding-right:3px;letter-spacing:0.15px;"></div>
<div class="a" style="left:711px;top:691px;width:67px;height:16px;line-height:17px;white-space:pre;background:#fff;border-right:1px solid #C6C3C6;border-bottom:1px solid #C6C3C6;text-align:right;padding-right:3px;letter-spacing:0.15px;"></div>
<div class="a" style="left:778px;top:691px;width:67px;height:16px;line-height:17px;white-space:pre;background:#fff;border-right:1px solid #C6C3C6;border-bottom:1px solid #C6C3C6;text-align:right;padding-right:3px;letter-spacing:0.15px;"></div>
<div class="a" style="left:845px;top:691px;width:67px;height:16px;line-height:17px;white-space:pre;background:#fff;border-right:1px solid #C6C3C6;border-bottom:1px solid #C6C3C6;text-align:right;padding-right:3px;letter-spacing:0.15px;"></div>
<div class="a" style="left:912px;top:691px;width:66px;height:16px;line-height:17px;white-space:pre;background:#fff;border-right:1px solid #C6C3C6;border-bottom:1px solid #C6C3C6;text-align:right;padding-right:3px;letter-spacing:0.15px;"></div>
<div class="a" style="left:97px;top:707px;width:93px;height:16px;line-height:17px;white-space:pre;background:#C6C3C6;color:#000;border-right:1px solid #848284;border-bottom:1px solid #848284;box-shadow:inset 1px 1px 0 #fff;padding-left:3px;letter-spacing:-0.2px;"></div>
<div class="a" style="left:190px;top:707px;width:93px;height:16px;line-height:17px;white-space:pre;background:#fff;border-right:1px solid #C6C3C6;border-bottom:1px solid #C6C3C6;padding-left:3px;letter-spacing:-0.2px;"></div>
<div class="a" style="left:283px;top:707px;width:93px;height:16px;line-height:17px;white-space:pre;background:#fff;border-right:1px solid #C6C3C6;border-bottom:1px solid #C6C3C6;padding-left:3px;letter-spacing:-0.2px;"></div>
<div class="a" style="left:376px;top:707px;width:67px;height:16px;line-height:17px;white-space:pre;background:#fff;border-right:1px solid #C6C3C6;border-bottom:1px solid #C6C3C6;text-align:right;padding-right:3px;letter-spacing:0.15px;"></div>
<div class="a" style="left:443px;top:707px;width:67px;height:16px;line-height:17px;white-space:pre;background:#fff;border-right:1px solid #C6C3C6;border-bottom:1px solid #C6C3C6;text-align:right;padding-right:3px;letter-spacing:0.15px;"></div>
<div class="a" style="left:510px;top:707px;width:67px;height:16px;line-height:17px;white-space:pre;background:#fff;border-right:1px solid #C6C3C6;border-bottom:1px solid #C6C3C6;text-align:right;padding-right:3px;letter-spacing:0.15px;"></div>
<div class="a" style="left:577px;top:707px;width:67px;height:16px;line-height:17px;white-space:pre;background:#fff;border-right:1px solid #C6C3C6;border-bottom:1px solid #C6C3C6;text-align:right;padding-right:3px;letter-spacing:0.15px;"></div>
<div class="a" style="left:644px;top:707px;width:67px;height:16px;line-height:17px;white-space:pre;background:#fff;border-right:1px solid #C6C3C6;border-bottom:1px solid #C6C3C6;text-align:right;padding-right:3px;letter-spacing:0.15px;"></div>
<div class="a" style="left:711px;top:707px;width:67px;height:16px;line-height:17px;white-space:pre;background:#fff;border-right:1px solid #C6C3C6;border-bottom:1px solid #C6C3C6;text-align:right;padding-right:3px;letter-spacing:0.15px;"></div>
<div class="a" style="left:778px;top:707px;width:67px;height:16px;line-height:17px;white-space:pre;background:#fff;border-right:1px solid #C6C3C6;border-bottom:1px solid #C6C3C6;text-align:right;padding-right:3px;letter-spacing:0.15px;"></div>
<div class="a" style="left:845px;top:707px;width:67px;height:16px;line-height:17px;white-space:pre;background:#fff;border-right:1px solid #C6C3C6;border-bottom:1px solid #C6C3C6;text-align:right;padding-right:3px;letter-spacing:0.15px;"></div>
<div class="a" style="left:912px;top:707px;width:66px;height:16px;line-height:17px;white-space:pre;background:#fff;border-right:1px solid #C6C3C6;border-bottom:1px solid #C6C3C6;text-align:right;padding-right:3px;letter-spacing:0.15px;"></div>
<div class="a" style="left:97px;top:723px;width:93px;height:16px;line-height:17px;white-space:pre;background:#C6C3C6;color:#000;border-right:1px solid #848284;border-bottom:1px solid #848284;box-shadow:inset 1px 1px 0 #fff;padding-left:3px;letter-spacing:-0.2px;"></div>
<div class="a" style="left:190px;top:723px;width:93px;height:16px;line-height:17px;white-space:pre;background:#fff;border-right:1px solid #C6C3C6;border-bottom:1px solid #C6C3C6;padding-left:3px;letter-spacing:-0.2px;"></div>
<div class="a" style="left:283px;top:723px;width:93px;height:16px;line-height:17px;white-space:pre;background:#fff;border-right:1px solid #C6C3C6;border-bottom:1px solid #C6C3C6;padding-left:3px;letter-spacing:-0.2px;"></div>
<div class="a" style="left:376px;top:723px;width:67px;height:16px;line-height:17px;white-space:pre;background:#fff;border-right:1px solid #C6C3C6;border-bottom:1px solid #C6C3C6;text-align:right;padding-right:3px;letter-spacing:0.15px;"></div>
<div class="a" style="left:443px;top:723px;width:67px;height:16px;line-height:17px;white-space:pre;background:#fff;border-right:1px solid #C6C3C6;border-bottom:1px solid #C6C3C6;text-align:right;padding-right:3px;letter-spacing:0.15px;"></div>
<div class="a" style="left:510px;top:723px;width:67px;height:16px;line-height:17px;white-space:pre;background:#fff;border-right:1px solid #C6C3C6;border-bottom:1px solid #C6C3C6;text-align:right;padding-right:3px;letter-spacing:0.15px;"></div>
<div class="a" style="left:577px;top:723px;width:67px;height:16px;line-height:17px;white-space:pre;background:#fff;border-right:1px solid #C6C3C6;border-bottom:1px solid #C6C3C6;text-align:right;padding-right:3px;letter-spacing:0.15px;"></div>
<div class="a" style="left:644px;top:723px;width:67px;height:16px;line-height:17px;white-space:pre;background:#fff;border-right:1px solid #C6C3C6;border-bottom:1px solid #C6C3C6;text-align:right;padding-right:3px;letter-spacing:0.15px;"></div>
<div class="a" style="left:711px;top:723px;width:67px;height:16px;line-height:17px;white-space:pre;background:#fff;border-right:1px solid #C6C3C6;border-bottom:1px solid #C6C3C6;text-align:right;padding-right:3px;letter-spacing:0.15px;"></div>
<div class="a" style="left:778px;top:723px;width:67px;height:16px;line-height:17px;white-space:pre;background:#fff;border-right:1px solid #C6C3C6;border-bottom:1px solid #C6C3C6;text-align:right;padding-right:3px;letter-spacing:0.15px;"></div>
<div class="a" style="left:845px;top:723px;width:67px;height:16px;line-height:17px;white-space:pre;background:#fff;border-right:1px solid #C6C3C6;border-bottom:1px solid #C6C3C6;text-align:right;padding-right:3px;letter-spacing:0.15px;"></div>
<div class="a" style="left:912px;top:723px;width:66px;height:16px;line-height:17px;white-space:pre;background:#fff;border-right:1px solid #C6C3C6;border-bottom:1px solid #C6C3C6;text-align:right;padding-right:3px;letter-spacing:0.15px;"></div>
</body></html>
